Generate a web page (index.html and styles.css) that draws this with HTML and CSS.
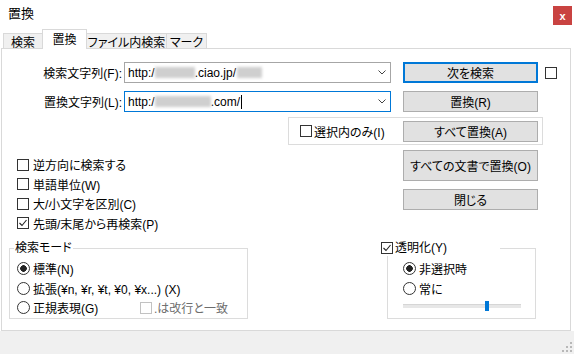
FILE: index.html
```html
<!DOCTYPE html>
<html lang="ja">
  <head>
    <meta charset="UTF-8" />
    <title>置換</title>
    <link rel="stylesheet" href="styles.css">
  </head>
  <body>
    <div class="titlebar">
      <span class="title">置換</span>
      <span class="close">x</span>
    </div>
    <div class="tabs">
      <span class="tab t1">検索</span>
      <span class="tab t2 active">置換</span>
      <span class="tab t3">ファイル内検索</span>
      <span class="tab t4">マーク</span>
    </div>
    <div class="panel">
      <div class="row first">
        <label class="lbl">検索文字列(F):</label>
        <div class="combo">
          <span>http:/</span><i class="blur b1"></i><span>.ciao.jp/</span><i class="blur b2"></i>
          <svg class="chev" width="8" height="5" viewBox="0 0 8 5"><polyline points="0.5,0.5 4,4 7.5,0.5" fill="none" stroke="#444" stroke-width="1"/></svg>
        </div>
        <button class="btn focus">次を検索</button>
        <span class="box side"></span>
      </div>
      <div class="row second">
        <label class="lbl">置換文字列(L):</label>
        <div class="combo active">
          <span>http:/</span><i class="blur b3"></i><span>.com/</span><span class="caret"></span>
          <svg class="chev" width="8" height="5" viewBox="0 0 8 5"><polyline points="0.5,0.5 4,4 7.5,0.5" fill="none" stroke="#444" stroke-width="1"/></svg>
        </div>
        <button class="btn">置換(R)</button>
      </div>
      <div class="scope">
        <span class="box"></span><span>選択内のみ(I)</span>
        <button class="btn">すべて置換(A)</button>
      </div>
      <div class="middle">
        <div class="opts">
          <div class="check"><span class="box"></span>逆方向に検索する</div>
          <div class="check"><span class="box"></span>単語単位(W)</div>
          <div class="check"><span class="box"></span>大/小文字を区別(C)</div>
          <div class="check"><span class="box on"><svg width="10" height="10" viewBox="0 0 10 10"><polyline points="1.5,5 4,7.5 8.5,2" fill="none" stroke="#222" stroke-width="1.1"/></svg></span>先頭/末尾から再検索(P)</div>
        </div>
        <div class="btns">
          <button class="btn tall">すべての文書で置換(O)</button>
          <button class="btn">閉じる</button>
        </div>
      </div>
      <div class="bottom">
        <fieldset class="group mode">
          <legend>検索モード</legend>
          <div class="check"><span class="radio on"></span>標準(N)</div>
          <div class="check"><span class="radio"></span>拡張(¥n, ¥r, ¥t, ¥0, ¥x...) (X)</div>
          <div class="check"><span class="radio"></span><span class="wide">正規表現(G)</span><span class="box dim"></span><span class="dimtext">.は改行と一致</span></div>
        </fieldset>
        <fieldset class="group trans">
          <legend><span class="box on"><svg width="10" height="10" viewBox="0 0 10 10"><polyline points="1.5,5 4,7.5 8.5,2" fill="none" stroke="#222" stroke-width="1.1"/></svg></span>透明化(Y)</legend>
          <div class="check"><span class="radio on"></span>非選択時</div>
          <div class="check"><span class="radio"></span>常に</div>
          <div class="slider"><span class="track"></span><span class="thumb"></span></div>
        </fieldset>
      </div>
    </div>
    <div class="footer">
      <svg width="10" height="10" viewBox="0 0 10 10" fill="#b8b8b8">
        <rect x="8" y="0" width="2" height="2"/>
        <rect x="4" y="4" width="2" height="2"/><rect x="8" y="4" width="2" height="2"/>
        <rect x="0" y="8" width="2" height="2"/><rect x="4" y="8" width="2" height="2"/><rect x="8" y="8" width="2" height="2"/>
      </svg>
    </div>
  </body>
</html>
```

FILE: styles.css
```css
body {
  margin: 0;
  width: 574px;
  height: 354px;
  overflow: hidden;
  background: #fff;
  color: #000;
  font-family: "Liberation Sans", "Noto Sans CJK JP", sans-serif;
  font-size: 12px;
  font-feature-settings: "palt";
}

.titlebar {
  height: 29px;
  display: flex;
  justify-content: space-between;
  align-items: flex-start;
}
.title {
  margin: 5px 0 0 8px;
  font-size: 13px;
  line-height: 18px;
}
.close {
  width: 19px;
  height: 19px;
  margin: 6px 2px 0 0;
  background: #c94341;
  color: #fff;
  font-weight: bold;
  font-size: 11px;
  display: flex;
  align-items: center;
  justify-content: center;
}

.tabs {
  height: 19px;
  display: flex;
  align-items: flex-end;
  padding-left: 3px;
}
.tab {
  box-sizing: border-box;
  height: 15px;
  border: 1px solid #d9d9d9;
  border-bottom: none;
  background: #f0f0f0;
  display: flex;
  align-items: center;
  justify-content: center;
  white-space: nowrap;
}
.t1 { width: 40px; }
.t2 { width: 45px; margin-left: -1px; }
.t3 { width: 81px; margin-left: -1px; }
.t4 { width: 41px; margin-left: -1px; }
.tab.active {
  height: 20px;
  margin-bottom: -1px;
  background: #fff;
  position: relative;
  z-index: 1;
  padding-bottom: 3px;
}

.panel {
  box-sizing: border-box;
  width: 570px;
  height: 283px;
  margin-left: 1px;
  border: 1px solid #d9d9d9;
}

.row {
  display: flex;
  align-items: center;
  height: 21px;
}
.row.first { margin-top: 13px; }
.row.second { margin-top: 8px; }
.lbl {
  width: 120px;
  text-align: right;
}
.combo {
  box-sizing: border-box;
  width: 267px;
  height: 21px;
  margin-left: 2px;
  padding-left: 3px;
  border: 1px solid #a6a6a6;
  display: flex;
  align-items: center;
}
.combo.active { border-color: #0078d7; }
.blur {
  height: 11px;
  background: #cfcfcf;
  filter: blur(1.5px);
}
.b1 { width: 40px; }
.b2 { width: 25px; margin-left: 1px; }
.b3 { width: 56px; }
.caret {
  width: 1px;
  height: 14px;
  background: #000;
  margin-left: 1px;
}
.chev {
  margin-left: auto;
  margin-right: 4px;
}

.btn {
  box-sizing: border-box;
  width: 135px;
  height: 21px;
  margin-left: 12px;
  padding: 0;
  background: #e1e1e1;
  border: 1px solid #adadad;
  font: inherit;
  color: #000;
}
.btn.focus { border: 2px solid #0078d7; }
.btn.tall { height: 31px; }

.box {
  box-sizing: border-box;
  width: 12px;
  height: 12px;
  border: 1px solid #333;
  background: #fff;
  margin-right: 4px;
  display: flex;
  align-items: center;
  justify-content: center;
  flex: none;
}
.box.side { margin-left: 7px; }
.box.dim { border-color: #c2c2c2; margin-right: 2px; }
.dimtext { color: #6d6d6d; }

.scope {
  box-sizing: border-box;
  width: 255px;
  height: 28px;
  margin: 5px 0 0 286px;
  padding-left: 11px;
  border: 1px solid #dcdcdc;
  display: flex;
  align-items: center;
}
.scope .box { margin-right: 2px; }
.scope .btn { margin: 0 4px 0 auto; }

.middle {
  display: grid;
  grid-template-columns: 401px 135px;
  height: 95px;
}
.opts {
  padding: 10px 0 0 15px;
}
.btns {
  padding-top: 5px;
  display: flex;
  flex-direction: column;
  gap: 8px;
}
.btns .btn { margin-left: 0; }

.check {
  height: 19.5px;
  display: flex;
  align-items: center;
}
.radio {
  box-sizing: border-box;
  width: 13px;
  height: 13px;
  border: 1px solid #333;
  border-radius: 50%;
  margin-right: 3px;
  flex: none;
}
.radio.on {
  background: radial-gradient(circle, #222 3px, #fff 3.6px);
}
.wide { width: 107px; }

.bottom {
  display: flex;
  align-items: flex-start;
}
.group {
  box-sizing: border-box;
  margin: 0;
  border: 1px solid #dcdcdc;
  padding: 3px 0 0;
  min-width: 0;
}
.group legend {
  height: 16px;
  line-height: 16px;
  padding: 0 1px;
}
.mode {
  width: 239px;
  margin-left: 7px;
  padding-left: 7px;
}
.mode legend { margin-left: -3px; }
.trans {
  width: 149px;
  margin-left: 139px;
  padding-left: 15px;
}
.trans legend {
  width: 119px;
  padding: 0;
  margin-left: -22px;
  display: flex;
  align-items: center;
}
.trans legend .box { margin-right: 2px; }

.slider {
  position: relative;
  height: 19.5px;
}
.track {
  position: absolute;
  top: 6px;
  left: 0;
  width: 118px;
  height: 4px;
  background: #e7e7e7;
  border-top: 1px solid #d6d6d6;
  box-sizing: border-box;
}
.thumb {
  position: absolute;
  top: 3px;
  left: 82px;
  width: 4px;
  height: 10px;
  background: #0078d7;
}

.footer {
  height: 23px;
  background: #f0f0f0;
  display: flex;
  justify-content: flex-end;
  align-items: flex-end;
  padding: 0 2px 2px 0;
  box-sizing: border-box;
}
```
